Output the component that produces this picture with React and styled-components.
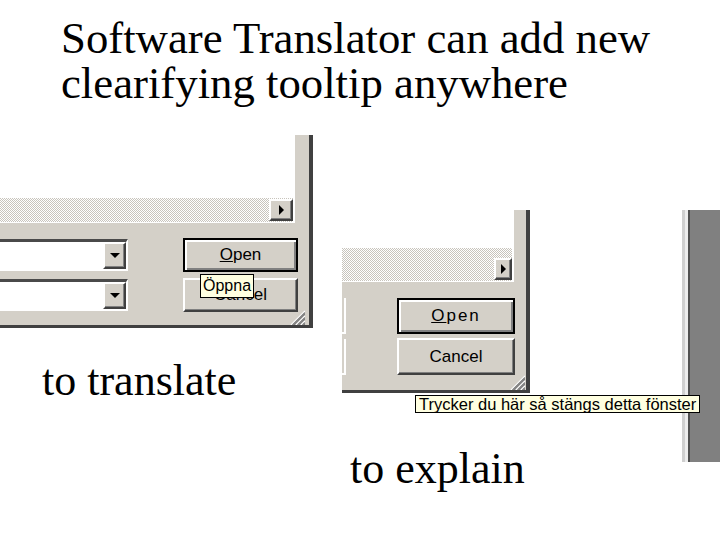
import React from "react";
import styled, { createGlobalStyle, css } from "styled-components";

const Global = createGlobalStyle`
  html, body { margin: 0; padding: 0; background: #fff; }
  #root { width: 720px; height: 540px; }
`;

const FACE = "#d4d0c8";

const raised = css`
  box-sizing: border-box;
  background: ${FACE};
  border: 2px solid;
  border-color: #fff #404040 #404040 #fff;
  box-shadow: inset -1px -1px #808080;
`;

const Slide = styled.div`
  width: 720px;
  height: 540px;
  background: #fff;
  overflow: hidden;
  color: #000;
  font-family: "Liberation Serif", "Times New Roman", serif;
`;

const Title = styled.h1`
  margin: 0;
  padding: 16px 0 0 61px;
  font-weight: normal;
  font-size: 44.75px;
  line-height: 45px;
`;

const Stage = styled.div`
  display: grid;
  grid-template-columns: 342px 378px;
`;

const Column = styled.div`
  display: flex;
  flex-direction: column;
  align-items: flex-start;
  padding-top: ${(p) => p.$top}px;
`;

const Caption = styled.p`
  margin: ${(p) => p.$gap}px 0 0 ${(p) => p.$indent}px;
  font-size: 44px;
  line-height: 45px;
  position: relative;
`;

const Win = styled.div`
  position: relative;
  box-sizing: border-box;
  width: ${(p) => p.$w}px;
  height: ${(p) => p.$h}px;
  background: ${FACE};
  border-right: 4px solid #404040;
  border-bottom: 3px solid #404040;
  display: flex;
  flex-direction: column;
  font-family: "Liberation Sans", Arial, sans-serif;
  font-size: ${(p) => p.$fs}px;
  color: #000;
`;

const ListPane = styled.div`
  margin-right: ${(p) => p.$mr}px;
  border-right: 2px solid #fff;
  border-bottom: 1px solid #fff;
  display: flex;
  flex-direction: column;
`;

const ListArea = styled.div`
  height: ${(p) => p.$h}px;
  background: #fff;
`;

const HScroll = styled.div`
  height: ${(p) => p.$h}px;
  background: repeating-conic-gradient(#fff 0 25%, #c8c4bc 0 50%) 0 0 / 2px 2px;
  display: flex;
  justify-content: flex-end;
  align-items: flex-end;
`;

const ArrowBtn = styled.div`
  ${raised};
  width: ${(p) => p.$w}px;
  height: 22px;
  margin-bottom: 1px;
  display: flex;
  align-items: center;
  justify-content: center;
  &::after {
    content: "";
    border-top: 5px solid transparent;
    border-bottom: 5px solid transparent;
    border-left: 5px solid #000;
  }
`;

const Body = styled.div`
  display: grid;
  grid-template-columns: ${(p) => p.$cols};
  grid-template-rows: ${(p) => p.$rows};
  column-gap: ${(p) => p.$cgap}px;
  row-gap: ${(p) => p.$rgap}px;
  padding-top: ${(p) => p.$top}px;
  align-items: center;
`;

const Combo = styled.div`
  box-sizing: border-box;
  height: ${(p) => p.$h}px;
  background: ${(p) => (p.$partial ? FACE : "#fff")};
  border-top: ${(p) => (p.$partial ? "0" : "3px solid #4a4a4a")};
  border-right: 2px solid #fff;
  border-bottom: 2px solid #fff;
  display: flex;
  justify-content: flex-end;
`;

const DropBtn = styled.div`
  ${raised};
  width: 23px;
  height: 100%;
  display: flex;
  align-items: center;
  justify-content: center;
  &::after {
    content: "";
    border-left: 5px solid transparent;
    border-right: 5px solid transparent;
    border-top: 5px solid #000;
  }
`;

const PushBtn = styled.div`
  box-sizing: border-box;
  align-self: stretch;
  display: flex;
  align-items: center;
  justify-content: center;
  background: ${FACE};
  letter-spacing: ${(p) => p.$ls || 0}px;
  ${(p) =>
    p.$default
      ? css`
          border: 2px solid #000;
          box-shadow: inset 2px 2px #fff, inset -2px -2px #808080;
        `
      : css`
          border: 2px solid;
          border-color: #fff #404040 #404040 #fff;
          box-shadow: inset -1px -1px #808080;
        `}
`;

const GripBox = styled.svg`
  position: absolute;
  right: ${(p) => p.$r}px;
  bottom: 0;
`;

const Tip = styled.div`
  position: absolute;
  left: ${(p) => p.$x}px;
  top: ${(p) => p.$y}px;
  background: #ffffe1;
  border: 1px solid #000;
  padding: 0 ${(p) => p.$pad}px;
  white-space: nowrap;
  font-family: "Liberation Sans", Arial, sans-serif;
  font-size: ${(p) => p.$fs}px;
  line-height: ${(p) => p.$lh}px;
  color: #000;
`;

const Shot2 = styled.div`
  position: relative;
  width: 378px;
  height: 252px;
  background: #fff;
  display: flex;
  justify-content: space-between;
  align-items: flex-start;
`;

const DesktopEdge = styled.div`
  align-self: stretch;
  width: 38px;
  background: linear-gradient(
    to right,
    #cfcfcf 0 3px,
    #ececec 3px 6px,
    #505050 6px 8px,
    #808080 8px
  );
`;

function Grip({ r }) {
  const offs = [2, 7, 12];
  return (
    <GripBox $r={r} width="16" height="16" viewBox="0 0 16 16">
      {offs.map((o) => (
        <g key={o} strokeWidth="1.3">
          <line x1={o} y1="16" x2="16" y2={o} stroke="#fff" />
          <line x1={o + 1.5} y1="16" x2="16" y2={o + 1.5} stroke="#808080" />
          <line x1={o + 3} y1="16" x2="16" y2={o + 3} stroke="#808080" />
        </g>
      ))}
    </GripBox>
  );
}

export default function App() {
  return (
    <>
      <Global />
      <Slide>
        <Title>
          Software Translator can add new
          <br />
          clearifying tooltip anywhere
        </Title>
        <Stage>
          <Column $top={29}>
            <Win $w={313} $h={193} $fs={17}>
              <ListPane $mr={14}>
                <ListArea $h={63} />
                <HScroll $h={24}>
                  <ArrowBtn $w={24} />
                </HScroll>
              </ListPane>
              <Body
                $cols="128px 115px"
                $rows="34px 34px"
                $cgap={55}
                $rgap={6}
                $top={15}
              >
                <Combo $h={32}>
                  <DropBtn />
                </Combo>
                <PushBtn $default>
                  <span>
                    <u>O</u>pen
                  </span>
                </PushBtn>
                <Combo $h={32}>
                  <DropBtn />
                </Combo>
                <PushBtn>Cancel</PushBtn>
              </Body>
              <Grip r={4} />
              <Tip $x={200} $y={139} $fs={16} $lh={22} $pad={2}>
                Öppna
              </Tip>
            </Win>
            <Caption $gap={30} $indent={42}>
              to translate
            </Caption>
          </Column>
          <Column $top={104}>
            <Shot2>
              <Win $w={188} $h={183} $fs={17}>
                <ListPane $mr={12}>
                  <ListArea $h={38} />
                  <HScroll $h={33}>
                    <ArrowBtn $w={18} />
                  </HScroll>
                </ListPane>
                <Body
                  $cols="4px 118px"
                  $rows="36px 37px"
                  $cgap={51}
                  $rgap={4}
                  $top={16}
                >
                  <Combo $h={36} $partial />
                  <PushBtn $default $ls={2}>
                    <span>
                      <u>O</u>pen
                    </span>
                  </PushBtn>
                  <Combo $h={36} $partial />
                  <PushBtn>Cancel</PushBtn>
                </Body>
                <Grip r={1} />
              </Win>
              <DesktopEdge />
              <Tip $x={73} $y={185} $fs={16.5} $lh={16} $pad={3}>
                Trycker du här så stängs detta fönster
              </Tip>
            </Shot2>
            <Caption $gap={-16} $indent={8}>
              to explain
            </Caption>
          </Column>
        </Stage>
      </Slide>
    </>
  );
}
